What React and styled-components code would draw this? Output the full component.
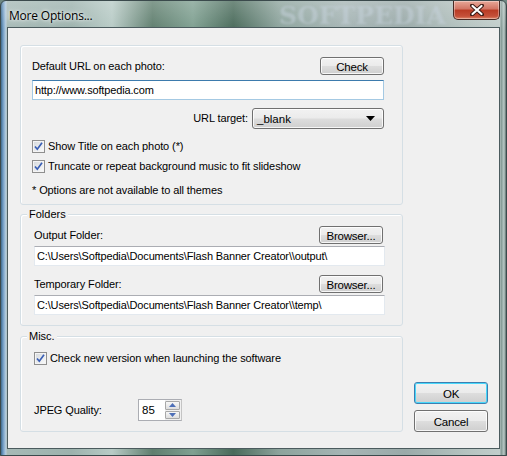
import React from 'react';
import styled, { createGlobalStyle } from 'styled-components';

const Global = createGlobalStyle`
	html, body {
		margin: 0;
		padding: 0;
		background: #6f8882;
	}
	* {
		box-sizing: border-box;
	}
`;

const Frame = styled.div`
	width: 507px;
	height: 456px;
	display: flex;
	flex-direction: column;
	padding: 0 6px 6px 6px;
	border: 1px solid #3b4a4c;
	border-radius: 6px 6px 0 0;
	font-family: 'Liberation Sans', Arial, sans-serif;
	background:
		linear-gradient(180deg, rgba(255, 255, 255, 0.22), rgba(255, 255, 255, 0) 30px),
		linear-gradient(90deg, #3f6a8c 0px, #6f9bc4 2px, #b9cfe0 5px, transparent 6px),
		linear-gradient(90deg, transparent 499px, #7f9691 500px, #b9c9c6 503px, #5d6f6c 505px),
		linear-gradient(90deg, #a7bab7 0%, #9cb2ad 14%, #b8cbc6 22%, #5f7e6e 30%, #7fa091 38%, #496a5a 46%, #8ca39c 55%, #a6b5b5 68%, #9aaaa9 80%, #b5c3c0 92%, #c3cfcd 100%);
	position: relative;
	overflow: hidden;
`;

const TitleBar = styled.div`
	height: 28px;
	display: flex;
	align-items: flex-start;
	justify-content: space-between;
	padding-left: 2px;
	position: relative;
`;

const Title = styled.span`
	font-family: 'Open Sans', 'Noto Sans', sans-serif;
	font-size: 12px;
	color: #000;
	margin-top: 6px;
	text-shadow: 0 0 6px rgba(255, 255, 255, 0.9), 0 0 3px rgba(255, 255, 255, 0.9);
	letter-spacing: -0.2px;
`;

const Watermark = styled.span`
	position: absolute;
	left: 272px;
	top: 0px;
	font-family: 'DejaVu Serif', serif;
	font-size: 25px;
	font-weight: bold;
	color: rgba(200, 212, 222, 0.5);
	filter: blur(1.3px);
	pointer-events: none;
`;

const CloseButton = styled.div`
	width: 47px;
	height: 19px;
	border: 1px solid #4a2a24;
	border-top: none;
	border-radius: 0 0 5px 5px;
	background: linear-gradient(180deg, #e8a898 0%, #d27463 45%, #b93b24 50%, #c5513a 85%, #e08a6c 100%);
	box-shadow: inset 0 0 0 1px rgba(255, 255, 255, 0.35);
	display: flex;
	align-items: center;
	justify-content: center;
	position: relative;
	z-index: 1;
`;

const Client = styled.div`
	flex: 1;
	display: flex;
	background: #f0f0f0;
	border: 1px solid #4b5b5e;
	padding: 17px 11px 16px 12px;
	gap: 11px;
	font-size: 11px;
	color: #000;
`;

const LeftColumn = styled.div`
	width: 383px;
	display: flex;
	flex-direction: column;
`;

const Group = styled.div`
	position: relative;
	height: ${(p) => p.h}px;
	margin-top: ${(p) => p.mt || 0}px;
	border: 1px solid #d5dfe5;
	border-radius: 3px;
	box-shadow: inset 1px 1px 0 #fff;
	padding: 11px 18px 0 ${(p) => p.pl || 11}px;
	display: flex;
	flex-direction: column;
`;

const Legend = styled.span`
	position: absolute;
	top: -7px;
	left: 6px;
	padding: 0 2px;
	background: #f0f0f0;
	line-height: 13px;
`;

const Row = styled.div`
	display: flex;
	align-items: center;
	justify-content: ${(p) => p.justify || 'flex-start'};
	height: ${(p) => p.h || 20}px;
	margin-top: ${(p) => p.mt || 0}px;
	gap: ${(p) => p.gap || 0}px;
	padding-right: ${(p) => p.pr || 0}px;
`;

const Label = styled.span`
	white-space: nowrap;
	line-height: 13px;
	letter-spacing: -0.1px;
	width: ${(p) => (p.w ? `${p.w}px` : 'auto')};
`;

const Button = styled.div`
	width: ${(p) => p.w}px;
	height: ${(p) => p.h || 18}px;
	border: 1px solid ${(p) => (p.primary ? '#3c7fb1' : '#707070')};
	border-radius: 3px;
	background: linear-gradient(180deg, #f2f2f2 0%, #ebebeb 48%, #dddddd 52%, #cfcfcf 100%);
	box-shadow: inset 0 0 0 1px ${(p) => (p.primary ? '#48d8fb' : 'rgba(255, 255, 255, 0.8)')};
	display: flex;
	align-items: center;
	justify-content: center;
	font-size: 11.5px;
	letter-spacing: -0.2px;
	padding-top: 1px;
`;

const TextBox = styled.div`
	height: 20px;
	margin-top: ${(p) => p.mt || 0}px;
	margin-right: ${(p) => p.mr || 0}px;
	background: #fff;
	border: 1px solid ${(p) => (p.focused ? '#a4c9e3' : '#e3e9ef')};
	border-top-color: ${(p) => (p.focused ? '#3d7bad' : '#abadb3')};
	display: flex;
	align-items: center;
	padding-left: 2px;
	white-space: nowrap;
	overflow: hidden;
	letter-spacing: -0.15px;
`;

const Select = styled.div`
	width: 132px;
	height: 21px;
	border: 1px solid #707070;
	border-radius: 3px;
	background: linear-gradient(180deg, #f2f2f2 0%, #ebebeb 48%, #dddddd 52%, #cfcfcf 100%);
	box-shadow: inset 0 0 0 1px rgba(255, 255, 255, 0.8);
	display: flex;
	align-items: center;
	justify-content: space-between;
	padding: 0 8px 0 4px;
	font-size: 11.5px;
`;

const CheckBox = styled.span`
	width: 13px;
	height: 13px;
	border: 1px solid #8f8f8f;
	background: linear-gradient(135deg, #d4d8dc, #fbfbfb);
	box-shadow: inset 0 0 0 1px #f4f4f4;
	display: inline-flex;
	align-items: center;
	justify-content: center;
	margin-right: 3px;
	flex-shrink: 0;
`;

const Spin = styled.div`
	display: flex;
	height: 22px;
	width: 44px;
	border: 1px solid #abadb3;
	border-right-color: #c4c4c4;
	background: #fff;
`;

const SpinValue = styled.div`
	flex: 1;
	display: flex;
	align-items: center;
	padding-left: 3px;
	font-size: 11.5px;
`;

const SpinButtons = styled.div`
	width: 16px;
	display: flex;
	flex-direction: column;
	gap: 1px;
	padding: 1px 1px 1px 0;
	background: #f0f0f0;
`;

const SpinButton = styled.div`
	flex: 1;
	border: 1px solid #a8a8a8;
	border-radius: 1px;
	background: linear-gradient(180deg, #f7f7f7, #dedede);
	display: flex;
	align-items: center;
	justify-content: center;
`;

const RightColumn = styled.div`
	flex: 1;
	display: flex;
	flex-direction: column;
	justify-content: flex-end;
	gap: 6px;
`;

const Check = () => (
	<CheckBox>
		<svg width="11" height="11" viewBox="0 0 11 11">
			<path d="M2 5.5 L4.3 8.2 L9 1.8" fill="none" stroke="#3a5fb5" strokeWidth="1.7" />
		</svg>
	</CheckBox>
);

const Arrow = ({ up }) => (
	<svg width="7" height="4" viewBox="0 0 7 4">
		<path d={up ? 'M0 4 L3.5 0 L7 4 Z' : 'M0 0 L3.5 4 L7 0 Z'} fill="#4d6fb8" />
	</svg>
);

const App = () => {
	return (
		<>
			<Global />
			<Frame>
				<TitleBar>
					<Watermark>SOFTPEDIA</Watermark>
					<Title>More Options...</Title>
					<CloseButton>
						<svg width="14" height="12" viewBox="0 0 14 12">
							<path d="M2 1.5 L12 10.5 M12 1.5 L2 10.5" stroke="#3a1a14" strokeWidth="4" strokeLinecap="round" />
							<path d="M2.5 2 L11.5 10 M11.5 2 L2.5 10" stroke="#fff" strokeWidth="2.2" strokeLinecap="round" />
						</svg>
					</CloseButton>
				</TitleBar>
				<Client>
					<LeftColumn>
						<Group h={160}>
							<Row h={18} justify="space-between">
								<Label>Default URL on each photo:</Label>
								<Button w={64}>Check</Button>
							</Row>
							<TextBox mt={5} focused>
								http://www.softpedia.com
							</TextBox>
							<Row h={21} mt={8} justify="flex-end" gap={4}>
								<Label>URL target:</Label>
								<Select>
									<span>_blank</span>
									<svg width="9" height="5" viewBox="0 0 9 5">
										<path d="M0 0 L9 0 L4.5 5 Z" fill="#000" />
									</svg>
								</Select>
							</Row>
							<Row mt={7}>
								<Check />
								<Label>Show Title on each photo (*)</Label>
							</Row>
							<Row>
								<Check />
								<Label>Truncate or repeat background music to fit slideshow</Label>
							</Row>
							<Row mt={4}>
								<Label>* Options are not available to all themes</Label>
							</Row>
						</Group>
						<Group h={112} mt={9} pl={13}>
							<Legend>Folders</Legend>
							<Row h={18} justify="space-between" pr={1}>
								<Label>Output Folder:</Label>
								<Button w={64}>Browser...</Button>
							</Row>
							<TextBox mt={2} mr={-1}>
								C:\Users\Softpedia\Documents\Flash Banner Creator\\output\
							</TextBox>
							<Row h={18} mt={9} justify="space-between" pr={1}>
								<Label>Temporary Folder:</Label>
								<Button w={64}>Browser...</Button>
							</Row>
							<TextBox mt={2} mr={-1}>
								C:\Users\Softpedia\Documents\Flash Banner Creator\\temp\
							</TextBox>
						</Group>
						<Group h={96} mt={10} pl={13}>
							<Legend>Misc.</Legend>
							<Row>
								<Check />
								<Label>Check new version when launching the software</Label>
							</Row>
							<Row h={22} mt={31}>
								<Label w={104}>JPEG Quality:</Label>
								<Spin>
									<SpinValue>85</SpinValue>
									<SpinButtons>
										<SpinButton>
											<Arrow up />
										</SpinButton>
										<SpinButton>
											<Arrow />
										</SpinButton>
									</SpinButtons>
								</Spin>
							</Row>
						</Group>
					</LeftColumn>
					<RightColumn>
						<Button w={74} h={22} primary>
							OK
						</Button>
						<Button w={74} h={22}>
							Cancel
						</Button>
					</RightColumn>
				</Client>
			</Frame>
		</>
	);
};

export default App;
